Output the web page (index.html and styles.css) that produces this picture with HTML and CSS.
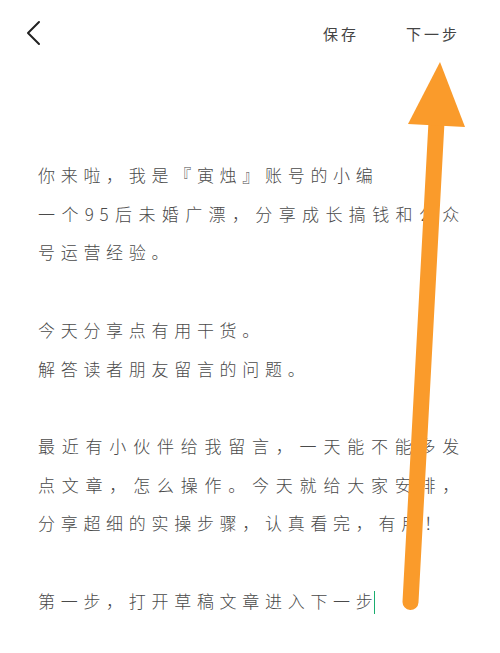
FILE: index.html
```html
<!DOCTYPE html>
<html lang="zh-CN">
<head>
<meta charset="utf-8">
<title>编辑</title>
<link rel="stylesheet" href="styles.css">
</head>
<body>
<div class="page">
  <header class="topbar">
    <svg class="back" width="16" height="26" viewBox="0 0 16 26"><path d="M13 2 L2 13 L13 24" fill="none" stroke="#222" stroke-width="2" stroke-linecap="round" stroke-linejoin="round"/></svg>
    <div class="actions">
      <span class="action">保存</span>
      <span class="action">下一步</span>
    </div>
  </header>
  <main class="content">
    <p class="para">你来啦，我是『寅烛』账号的小编<br>一个95后未婚广漂，分享成长搞钱和公众号运营经验。</p>
    <p class="para">今天分享点有用干货。<br>解答读者朋友留言的问题。</p>
    <p class="para">最近有小伙伴给我留言，一天能不能多发点文章，怎么操作。今天就给大家安排，分享超细的实操步骤，认真看完，有用！</p>
    <p class="para">第一步，打开草稿文章进入下一步<span class="caret"></span></p>
  </main>
  <svg class="arrow" width="500" height="653" viewBox="0 0 500 653">
    <path d="M436.5 122 L410.5 602" fill="none" stroke="#FA9B2B" stroke-width="16" stroke-linecap="round"/>
    <polygon points="440,62 408,124 465,127" fill="#FA9B2B"/>
  </svg>
</div>
</body>
</html>
```
FILE: styles.css
```css
html, body {
  margin: 0;
  padding: 0;
  background: #ffffff;
}
.page {
  position: relative;
  width: 500px;
  height: 653px;
  overflow: hidden;
  font-family: "Noto Sans CJK SC", "Noto Sans", sans-serif;
  color: #4a4a4a;
}
.topbar {
  height: 66px;
  display: flex;
  align-items: center;
  justify-content: space-between;
  padding: 0 40px 0 26px;
}
.back {
  display: block;
}
.actions {
  display: flex;
  gap: 47px;
}
.action {
  font-size: 15px;
  letter-spacing: 3px;
  color: #444;
}
.content {
  margin-top: 90px;
  padding-left: 38px;
  width: 427px;
}
.para {
  margin: 0 0 38.7px 0;
  font-size: 17px;
  line-height: 38.7px;
  letter-spacing: 5.7px;
  text-align: justify;
  font-weight: 300;
}
.caret {
  display: inline-block;
  width: 1.5px;
  height: 23px;
  background: #1aad6f;
  vertical-align: -6px;
  margin-left: -5px;
}
.arrow {
  position: absolute;
  left: 0;
  top: 0;
  pointer-events: none;
}
```
